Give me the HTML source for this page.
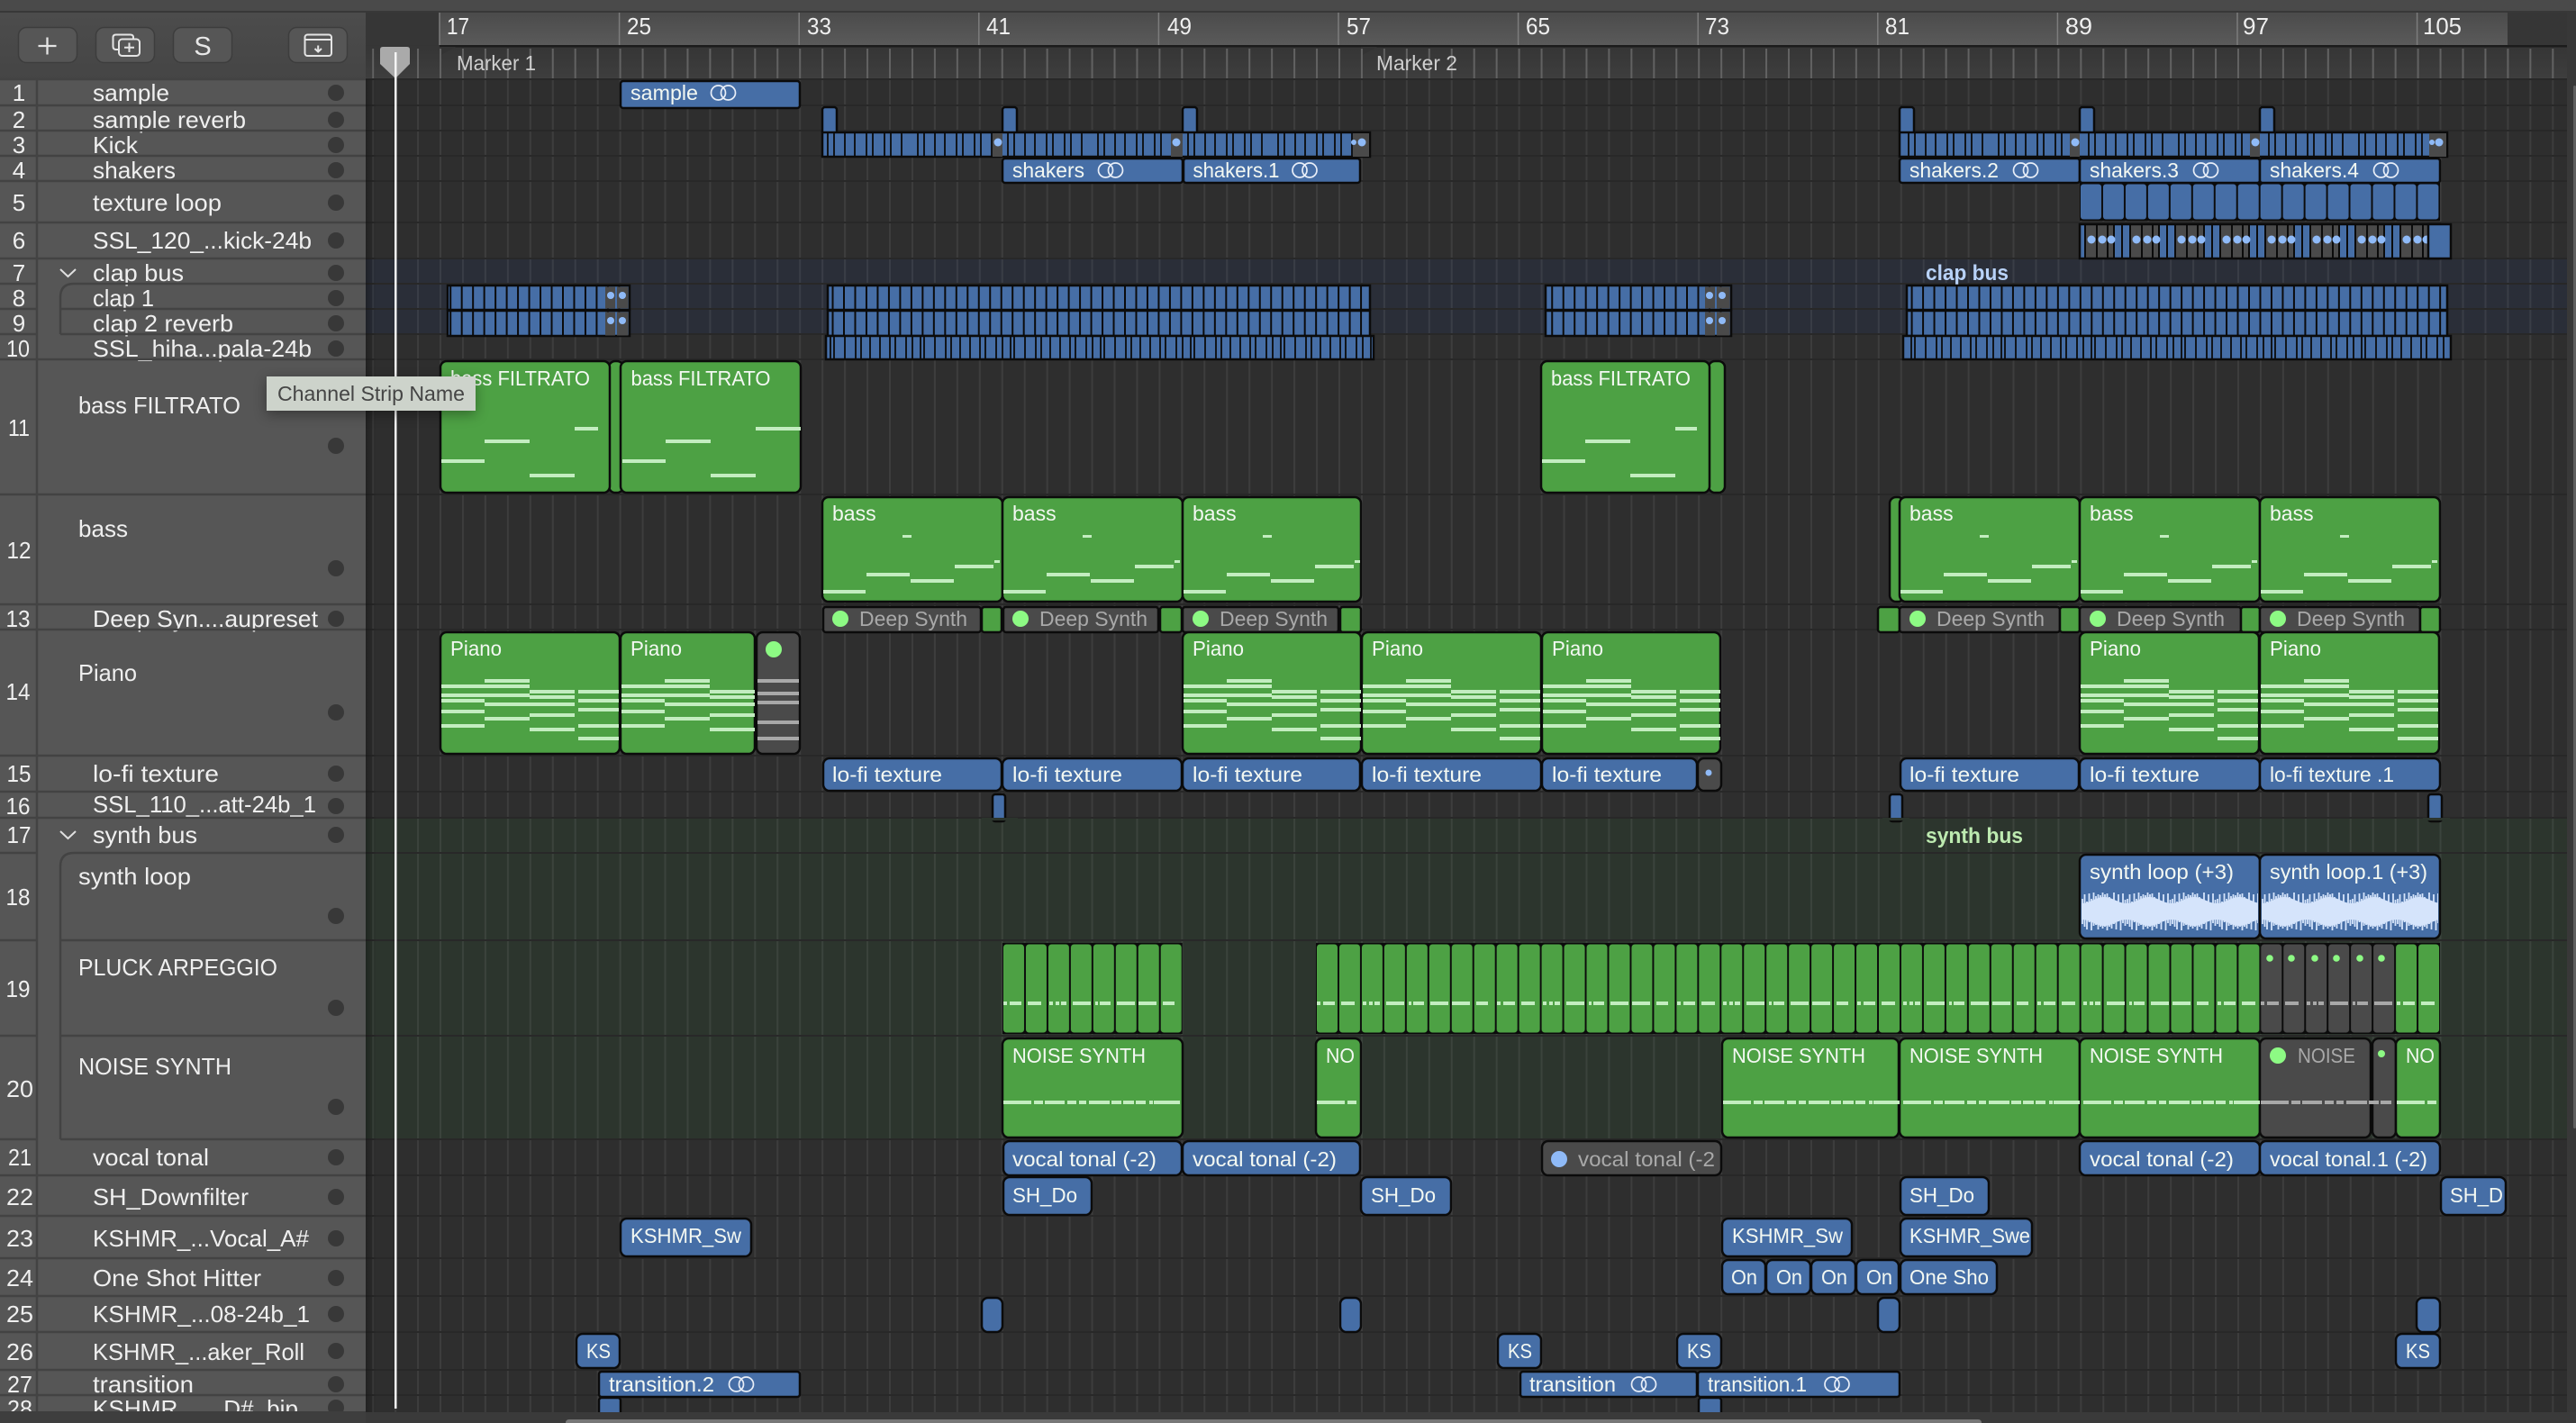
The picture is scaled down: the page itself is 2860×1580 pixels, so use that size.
<!DOCTYPE html>
<html><head><meta charset="utf-8"><title>Arrangement</title>
<style>
html,body{margin:0;padding:0;background:#2e2e2e;width:2860px;height:1580px;overflow:hidden}
svg{position:absolute;left:0;top:0;display:block}
text{font:23px "Liberation Sans",sans-serif;fill:#f3f8f2}
.n{font-size:26px;fill:#efefef}
.mt{fill:#a9a9a9}
.bd{font-weight:bold;font-size:24px}
.b{fill:#466ea6}.g{fill:#4da144}.m{fill:#4a4a4a}
.b,.g,.m,.k{stroke:#0b0b0b;stroke-width:2.5}
.b,.g,.m{rx:7px}
.q{rx:3px}
.dot{fill:#383838}
.bl{fill:#8fbaf7}.gd{fill:#8dfa84}
</style></head><body>
<svg width="2860" height="1580" viewBox="0 0 2860 1580" xmlns="http://www.w3.org/2000/svg">
<defs>
<linearGradient id="rg" x1="0" y1="0" x2="0" y2="1"><stop offset="0" stop-color="#4b4b4b"/><stop offset="1" stop-color="#5a5a5a"/></linearGradient>
<linearGradient id="lg" x1="0" y1="0" x2="0" y2="1"><stop offset="0" stop-color="#353535"/><stop offset="1" stop-color="#3e3e3e"/></linearGradient>
<linearGradient id="hg" x1="0" y1="0" x2="0" y2="1"><stop offset="0" stop-color="#4c4c4c"/><stop offset="1" stop-color="#454545"/></linearGradient>
<linearGradient id="sh" x1="0" y1="0" x2="1" y2="0"><stop offset="0" stop-color="#000" stop-opacity=".28"/><stop offset="1" stop-color="#000" stop-opacity="0"/></linearGradient>
<pattern id="pV" patternUnits="userSpaceOnUse" width="24.95" height="40"><rect width="2" height="40" fill="#fff" fill-opacity=".07"/></pattern>
<pattern id="pT" patternUnits="userSpaceOnUse" width="24.95" height="40"><rect width="2" height="40" fill="#626262"/></pattern>
<pattern id="pK" patternUnits="userSpaceOnUse" width="100" height="40" patternTransform="translate(13,0)"><rect width="100" height="40" fill="#466ea6"/><path d="M6 0v40M13 0v40M25 0v40M36 0v40M49 0v40M56 0v40M69 0v40M76 0v40M88 0v40" stroke="#0b0b0b" stroke-width="1.800"/></pattern>
<pattern id="pC" patternUnits="userSpaceOnUse" width="12.48" height="40"><rect width="12.48" height="40" fill="#466ea6"/><rect width="2" height="40" fill="#0b0b0b"/></pattern>
<pattern id="pH" patternUnits="userSpaceOnUse" width="100" height="40"><rect width="100" height="40" fill="#466ea6"/><path d="M6 0v40M13 0v40M22 0v40M26 0v40M38 0v40M50 0v40M56 0v40M66 0v40M77 0v40M88 0v40M94 0v40" stroke="#0b0b0b" stroke-width="1.800"/></pattern>
<pattern id="pR" patternUnits="userSpaceOnUse" width="24.96" height="42"><rect width="24.96" height="42" fill="#0b0b0b"/><rect x="1" y="1.5" width="23" height="39" rx="3" fill="#466ea6"/></pattern>
<pattern id="pS" patternUnits="userSpaceOnUse" width="50" height="38"><rect width="50" height="38" fill="#466ea6"/><rect x="6" width="32" height="38" fill="#4a4a4a"/><path d="M6 0v38M19 0v38M31 0v38M38 0v38M47 0v38" stroke="#0b0b0b" stroke-width="2"/><circle cx="13" cy="17" r="4.5" fill="#8fbaf7"/><circle cx="25" cy="17" r="4.5" fill="#8fbaf7"/><circle cx="35" cy="17" r="4.5" fill="#8fbaf7"/></pattern>
<pattern id="pG" patternUnits="userSpaceOnUse" width="24.96" height="101"><rect width="24.96" height="101" fill="#0b0b0b"/><rect x="1" y="1.5" width="23" height="98" rx="3.5" fill="#4da144"/></pattern>
<pattern id="pGm" patternUnits="userSpaceOnUse" width="24.96" height="101"><rect width="24.96" height="101" fill="#0b0b0b"/><rect x="1" y="1.5" width="23" height="98" rx="3.5" fill="#4a4a4a"/></pattern>
<pattern id="pD" patternUnits="userSpaceOnUse" width="200" height="4"><path d="M1 2H5M8 2H21M28 2H43M52 2H56M59 2H63M65 2H71M78 2H98M103 2H106M108 2H120M127 2H147M151 2H171M178 2H191" stroke="#c3edc0" stroke-width="4"/></pattern>
<pattern id="pDm" patternUnits="userSpaceOnUse" width="200" height="4"><path d="M1 2H5M8 2H21M28 2H43M52 2H56M59 2H63M65 2H71M78 2H98M103 2H106M108 2H120M127 2H147M151 2H171M178 2H191" stroke="#a8a8a8" stroke-width="4"/></pattern>
<pattern id="pN" patternUnits="userSpaceOnUse" width="200" height="4"><path d="M1 2H32M35 2H45M47 2H69M72 2H82M85 2H93M96 2H119M121 2H132M134 2H146M148 2H159M163 2H167M168 2H197" stroke="#c3edc0" stroke-width="4"/></pattern>
<pattern id="pNm" patternUnits="userSpaceOnUse" width="200" height="4"><path d="M1 2H32M35 2H45M47 2H69M72 2H82M85 2H93M96 2H119M121 2H132M134 2H146M148 2H159M163 2H167M168 2H197" stroke="#a8a8a8" stroke-width="4"/></pattern>
<pattern id="pW" patternUnits="userSpaceOnUse" width="50" height="44"><path d="M0 13C10 13 15 6 25 6C35 6 40 13 50 13V31C40 31 35 38 25 38C15 38 10 31 0 31Z" fill="#d5e4fb"/><path d="M1 8V36M3.500 3V39M6 11V42M8.500 2V34M11 8V43M13.500 1V38M16 5V37M18.500 3V42M21 4V39M23.500 1V41M26 3V39M28.500 2V43M31 6V39M33.500 8V41M36 1V36M38.500 10V42M41 3V33M43.500 12V43M46 2V35M48.500 9V38" stroke="#d5e4fb" stroke-width="1.800"/></pattern>
<g id="lp" fill="none" stroke="#e8eef8" stroke-width="1.7"><circle cx="-5.500" r="8"/><circle cx="5.500" r="8"/></g>
<g id="fn" fill="#c3edc0"><rect x="2" y="510" width="48" height="4"/><rect x="50" y="488" width="50" height="4"/><rect x="100" y="526" width="50" height="4"/><rect x="150" y="474" width="50" height="4"/></g>
<g id="bn" fill="#c3edc0"><rect x="1" y="655" width="47" height="4"/><rect x="49" y="636" width="48" height="4"/><rect x="98" y="643" width="48" height="4"/><rect x="147" y="627" width="43" height="4"/><rect x="191" y="622" width="6" height="3"/><rect x="89" y="594" width="10" height="3"/></g>
<g id="pn" fill="#c3edc0"><rect x="1" y="760" width="48" height="4"/><rect x="1" y="770" width="48" height="4"/><rect x="1" y="776" width="48" height="4"/><rect x="1" y="788" width="48" height="4"/><rect x="1" y="804" width="48" height="4"/><rect x="49" y="754" width="50" height="4"/><rect x="49" y="760" width="50" height="4"/><rect x="49" y="770" width="50" height="4"/><rect x="49" y="780" width="50" height="4"/><rect x="49" y="796" width="50" height="4"/><rect x="99" y="766" width="50" height="4"/><rect x="99" y="772" width="50" height="4"/><rect x="99" y="780" width="50" height="4"/><rect x="99" y="792" width="50" height="4"/><rect x="99" y="808" width="50" height="4"/></g>
<g id="pn4" fill="#c3edc0"><rect x="153" y="766" width="45" height="4"/><rect x="153" y="776" width="45" height="4"/><rect x="153" y="786" width="45" height="4"/><rect x="153" y="804" width="45" height="4"/><rect x="153" y="818" width="45" height="4"/></g>
</defs>

<!-- backgrounds -->
<rect width="2860" height="1580" fill="#2e2e2e"/>
<rect width="2860" height="13" fill="#4a4a4a"/>
<rect y="12" width="2860" height="2" fill="#383838"/>
<rect x="406" y="14" width="2454" height="74" fill="#363636"/>
<rect x="488" y="14" width="2296" height="36" fill="url(#rg)"/>
<rect x="406" y="50" width="2444" height="38" fill="url(#lg)"/>
<rect x="488" y="50" width="2362" height="2.500" fill="#1c1c1c"/>
<path d="M488 62V52H506Z" fill="#333"/>
<path d="M1511 62V52H1529Z" fill="#333"/>
<rect x="2850" y="14" width="10" height="1566" fill="#383838"/>
<rect x="406" y="287" width="2444" height="84" fill="#2a2e38"/>
<rect x="406" y="908" width="2444" height="357" fill="#2c352d"/>
<g transform="translate(413.150,54)"><rect width="2436" height="34" fill="url(#pT)"/></g>
<g transform="translate(413.150,88)"><rect width="2436" height="1480" fill="url(#pV)"/></g>
<path stroke="#282828" stroke-width="2" d="M406 88H2850M406 117H2850M406 145H2850M406 173H2850M406 201H2850M406 247H2850M406 287H2850M406 315H2850M406 343H2850M406 371H2850M406 399H2850M406 549H2850M406 671H2850M406 699H2850M406 839H2850M406 879H2850M406 908H2850M406 947H2850M406 1044H2850M406 1150H2850M406 1265H2850M406 1305H2850M406 1350H2850M406 1397H2850M406 1439H2850M406 1479H2850M406 1521H2850M406 1549H2850"/>
<rect x="406" y="88" width="12" height="1480" fill="url(#sh)"/>

<!-- ruler -->
<path stroke="#7c7c7c" stroke-width="1.500" d="M488 14V50M687.600 14V50M887.200 14V50M1086.800 14V50M1286.400 14V50M1486 14V50M1685.600 14V50M1885.200 14V50M2084.800 14V50M2284.400 14V50M2484 14V50M2683.600 14V50"/>
<g style="fill:#dcdcdc">
<text class="n" x="496" y="38" textLength="25" lengthAdjust="spacingAndGlyphs">17</text>
<text class="n" x="696" y="38" textLength="27" lengthAdjust="spacingAndGlyphs">25</text>
<text class="n" x="896" y="38" textLength="27" lengthAdjust="spacingAndGlyphs">33</text>
<text class="n" x="1095" y="38" textLength="27" lengthAdjust="spacingAndGlyphs">41</text>
<text class="n" x="1296" y="38" textLength="27" lengthAdjust="spacingAndGlyphs">49</text>
<text class="n" x="1495" y="38" textLength="27" lengthAdjust="spacingAndGlyphs">57</text>
<text class="n" x="1694" y="38" textLength="27" lengthAdjust="spacingAndGlyphs">65</text>
<text class="n" x="1893" y="38" textLength="27" lengthAdjust="spacingAndGlyphs">73</text>
<text class="n" x="2093" y="38" textLength="27" lengthAdjust="spacingAndGlyphs">81</text>
<text class="n" x="2293" y="38" textLength="30" lengthAdjust="spacingAndGlyphs">89</text>
<text class="n" x="2490" y="38" textLength="29" lengthAdjust="spacingAndGlyphs">97</text>
<text class="n" x="2690" y="38" textLength="43" lengthAdjust="spacingAndGlyphs">105</text>
</g>
<text x="507" y="78" textLength="88" lengthAdjust="spacingAndGlyphs" style="fill:#cfcfcf">Marker 1</text>
<text x="1528" y="78" textLength="90" lengthAdjust="spacingAndGlyphs" style="fill:#cfcfcf">Marker 2</text>

<!-- track list -->
<rect x="0" y="14" width="406" height="74" fill="url(#hg)"/>
<rect x="0" y="88" width="406" height="1480" fill="#565656"/>
<rect x="0" y="1567" width="406" height="13" fill="#3e3e3e"/>
<g fill="#565656" stroke="#3d3d3d" stroke-width="1.500">
<rect x="20.500" y="30.500" width="65" height="39" rx="9"/>
<rect x="106.500" y="30.500" width="65" height="39" rx="9"/>
<rect x="192.500" y="30.500" width="65" height="39" rx="9"/>
<rect x="320.500" y="30.500" width="65" height="39" rx="9"/>
</g>
<path d="M42.500 51H62.500M52.500 41.500V60.500" stroke="#e4e4e4" stroke-width="2.300" fill="none"/>
<path d="M132 55H129Q125.500 55 125.500 51.500V41.500Q125.500 38.500 129 38.500H144.500Q148 38.500 148 41.500V43" stroke="#e4e4e4" stroke-width="2" fill="none"/>
<rect x="132" y="43.500" width="23" height="18.500" rx="3.500" stroke="#e4e4e4" stroke-width="2" fill="none"/>
<path d="M138 52.700H149M143.500 47.500V58" stroke="#e4e4e4" stroke-width="2" fill="none"/>
<text x="225" y="61" text-anchor="middle" style="font-size:29px;fill:#e8e8e8">S</text>
<rect x="338.500" y="38.500" width="29.500" height="23.500" rx="3" stroke="#e4e4e4" stroke-width="2" fill="none"/>
<path d="M338.500 44H368M353.200 50.500V57.500M349.500 54L353.200 57.500L357 54" stroke="#e4e4e4" stroke-width="2" fill="none"/>

<g>
<g class="nums" text-anchor="middle">
<text class="n" x="21" y="112" text-anchor="middle">1</text>
<text class="n" x="21" y="142" text-anchor="middle">2</text>
<text class="n" x="21" y="170" text-anchor="middle">3</text>
<text class="n" x="21" y="198" text-anchor="middle">4</text>
<text class="n" x="21" y="234" text-anchor="middle">5</text>
<text class="n" x="21" y="276" text-anchor="middle">6</text>
<text class="n" x="21" y="312" text-anchor="middle">7</text>
<text class="n" x="21" y="340" text-anchor="middle">8</text>
<text class="n" x="21" y="368" text-anchor="middle">9</text>
<text class="n" x="20" y="396" text-anchor="middle" textLength="26" lengthAdjust="spacingAndGlyphs">10</text>
<text class="n" x="21" y="484" text-anchor="middle" textLength="24" lengthAdjust="spacingAndGlyphs">11</text>
<text class="n" x="21" y="620" text-anchor="middle" textLength="27" lengthAdjust="spacingAndGlyphs">12</text>
<text class="n" x="20" y="696" text-anchor="middle" textLength="27" lengthAdjust="spacingAndGlyphs">13</text>
<text class="n" x="20" y="777" text-anchor="middle" textLength="27" lengthAdjust="spacingAndGlyphs">14</text>
<text class="n" x="21" y="868" text-anchor="middle" textLength="27" lengthAdjust="spacingAndGlyphs">15</text>
<text class="n" x="20" y="904" text-anchor="middle" textLength="27" lengthAdjust="spacingAndGlyphs">16</text>
<text class="n" x="21" y="936" text-anchor="middle" textLength="27" lengthAdjust="spacingAndGlyphs">17</text>
<text class="n" x="20" y="1005" text-anchor="middle" textLength="27" lengthAdjust="spacingAndGlyphs">18</text>
<text class="n" x="20" y="1107" text-anchor="middle" textLength="27" lengthAdjust="spacingAndGlyphs">19</text>
<text class="n" x="22" y="1218" text-anchor="middle" textLength="30" lengthAdjust="spacingAndGlyphs">20</text>
<text class="n" x="22" y="1294" text-anchor="middle" textLength="26" lengthAdjust="spacingAndGlyphs">21</text>
<text class="n" x="22" y="1338" text-anchor="middle" textLength="30" lengthAdjust="spacingAndGlyphs">22</text>
<text class="n" x="22" y="1384" text-anchor="middle" textLength="30" lengthAdjust="spacingAndGlyphs">23</text>
<text class="n" x="22" y="1428" text-anchor="middle" textLength="30" lengthAdjust="spacingAndGlyphs">24</text>
<text class="n" x="22" y="1468" text-anchor="middle" textLength="30" lengthAdjust="spacingAndGlyphs">25</text>
<text class="n" x="22" y="1510" text-anchor="middle" textLength="30" lengthAdjust="spacingAndGlyphs">26</text>
<text class="n" x="22" y="1546" text-anchor="middle" textLength="28" lengthAdjust="spacingAndGlyphs">27</text>
<text class="n" x="22" y="1573" text-anchor="middle" textLength="28" lengthAdjust="spacingAndGlyphs">28</text>
</g>
<text class="n" x="103" y="112" textLength="85" lengthAdjust="spacingAndGlyphs">sample</text>
<text class="n" x="103" y="142" textLength="170" lengthAdjust="spacingAndGlyphs">sample reverb</text>
<text class="n" x="103" y="170" textLength="50" lengthAdjust="spacingAndGlyphs">Kick</text>
<text class="n" x="103" y="198" textLength="92" lengthAdjust="spacingAndGlyphs">shakers</text>
<text class="n" x="103" y="234" textLength="143" lengthAdjust="spacingAndGlyphs">texture loop</text>
<text class="n" x="103" y="276" textLength="243" lengthAdjust="spacingAndGlyphs">SSL_120_...kick-24b</text>
<text class="n" x="103" y="312" textLength="101" lengthAdjust="spacingAndGlyphs">clap bus</text>
<text class="n" x="103" y="340" textLength="68" lengthAdjust="spacingAndGlyphs">clap 1</text>
<text class="n" x="103" y="368" textLength="156" lengthAdjust="spacingAndGlyphs">clap 2 reverb</text>
<text class="n" x="103" y="396" textLength="243" lengthAdjust="spacingAndGlyphs">SSL_hiha...pala-24b</text>
<text class="n" x="87" y="459" textLength="180" lengthAdjust="spacingAndGlyphs">bass FILTRATO</text>
<text class="n" x="87" y="596" textLength="55" lengthAdjust="spacingAndGlyphs">bass</text>
<text class="n" x="103" y="696" textLength="250" lengthAdjust="spacingAndGlyphs">Deep Syn....aupreset</text>
<text class="n" x="87" y="756" textLength="65" lengthAdjust="spacingAndGlyphs">Piano</text>
<text class="n" x="103" y="868" textLength="140" lengthAdjust="spacingAndGlyphs">lo-fi texture</text>
<text class="n" x="103" y="902" textLength="248" lengthAdjust="spacingAndGlyphs">SSL_110_...att-24b_1</text>
<text class="n" x="103" y="936" textLength="116" lengthAdjust="spacingAndGlyphs">synth bus</text>
<text class="n" x="87" y="982" textLength="125" lengthAdjust="spacingAndGlyphs">synth loop</text>
<text class="n" x="87" y="1083" textLength="221" lengthAdjust="spacingAndGlyphs">PLUCK ARPEGGIO</text>
<text class="n" x="87" y="1193" textLength="170" lengthAdjust="spacingAndGlyphs">NOISE SYNTH</text>
<text class="n" x="103" y="1294" textLength="129" lengthAdjust="spacingAndGlyphs">vocal tonal</text>
<text class="n" x="103" y="1338" textLength="173" lengthAdjust="spacingAndGlyphs">SH_Downfilter</text>
<text class="n" x="103" y="1384" textLength="240" lengthAdjust="spacingAndGlyphs">KSHMR_...Vocal_A#</text>
<text class="n" x="103" y="1428" textLength="187" lengthAdjust="spacingAndGlyphs">One Shot Hitter</text>
<text class="n" x="103" y="1468" textLength="241" lengthAdjust="spacingAndGlyphs">KSHMR_...08-24b_1</text>
<text class="n" x="103" y="1510" textLength="235" lengthAdjust="spacingAndGlyphs">KSHMR_...aker_Roll</text>
<text class="n" x="103" y="1546" textLength="112" lengthAdjust="spacingAndGlyphs">transition</text>
<text class="n" x="103" y="1573" textLength="228" lengthAdjust="spacingAndGlyphs">KSHMR_..._D#_bip</text>
</g>
<path fill="none" stroke="#434343" stroke-width="2.500" d="M0 88H406M0 117H406M0 145H406M0 173H406M0 201H406M0 247H406M0 287H406M0 315H41M0 343H41M0 371H41M0 399H406M0 549H406M0 671H406M0 699H406M0 839H406M0 879H406M0 908H406M0 947H41M0 1044H41M0 1150H41M0 1265H41M0 1305H406M0 1350H406M0 1397H406M0 1439H406M0 1479H406M0 1521H406M0 1549H406M41 88V1567M67 371V330Q67 315 82 315H406M67 343H406M67 371H406M67 1265V962Q67 947 82 947H406M67 1044H406M67 1150H406M67 1265H406"/>
<path d="M67 299L75.500 307L84 299M67 923L75.500 931L84 923" fill="none" stroke="#e0e0e0" stroke-width="2"/>
<g class="dot">
<circle cx="373" cy="103" r="9"/><circle cx="373" cy="133" r="9"/><circle cx="373" cy="161" r="9"/><circle cx="373" cy="189" r="9"/><circle cx="373" cy="225" r="9"/><circle cx="373" cy="267" r="9"/><circle cx="373" cy="303" r="9"/><circle cx="373" cy="331" r="9"/><circle cx="373" cy="359" r="9"/><circle cx="373" cy="387" r="9"/><circle cx="373" cy="495" r="9"/><circle cx="373" cy="631" r="9"/><circle cx="373" cy="687" r="9"/><circle cx="373" cy="791" r="9"/><circle cx="373" cy="859" r="9"/><circle cx="373" cy="895" r="9"/><circle cx="373" cy="927" r="9"/><circle cx="373" cy="1017" r="9"/><circle cx="373" cy="1119" r="9"/><circle cx="373" cy="1229" r="9"/><circle cx="373" cy="1285" r="9"/><circle cx="373" cy="1329" r="9"/><circle cx="373" cy="1375" r="9"/><circle cx="373" cy="1419" r="9"/><circle cx="373" cy="1459" r="9"/><circle cx="373" cy="1500" r="9"/><circle cx="373" cy="1537" r="9"/><circle cx="373" cy="1563" r="9"/>
</g>

<!-- row 1 -->
<rect class="b q" x="689" y="90" width="199" height="30"/>
<text x="700" y="111" textLength="75" lengthAdjust="spacingAndGlyphs">sample</text><use href="#lp" x="803" y="103"/>
<!-- row 2 -->
<rect class="b q" x="913" y="119" width="16" height="30"/><rect class="b q" x="1113" y="119" width="16" height="30"/><rect class="b q" x="1313" y="119" width="16" height="30"/><rect class="b q" x="2109" y="119" width="16" height="30"/><rect class="b q" x="2309" y="119" width="16" height="30"/><rect class="b q" x="2509" y="119" width="16" height="30"/>
<!-- row 3 -->
<rect class="k" x="913" y="147" width="608" height="27" fill="url(#pK)"/>
<rect class="k" x="2109" y="147" width="608" height="27" fill="url(#pK)"/>
<g fill="#4a4a4a">
<rect x="1102" y="148" width="11" height="26"/><rect x="1300" y="148" width="13" height="26"/><rect x="1502" y="148" width="18" height="26"/><rect x="2298" y="148" width="11" height="26"/><rect x="2498" y="148" width="11" height="26"/><rect x="2697" y="148" width="19" height="26"/>
</g>
<g class="bl"><circle cx="1108" cy="158" r="4.500"/><circle cx="1306" cy="158" r="4.500"/><circle cx="1512" cy="158" r="4.500"/><circle cx="1503" cy="158" r="3"/><circle cx="2304" cy="158" r="4.500"/><circle cx="2504" cy="158" r="4.500"/><circle cx="2708" cy="158" r="4.500"/><circle cx="2700" cy="158" r="3"/></g>
<!-- row 4 -->
<rect class="b q" x="1113" y="176" width="200" height="27"/><rect class="b q" x="1314" y="176" width="196" height="27"/>
<rect class="b q" x="2109" y="176" width="200" height="27"/><rect class="b q" x="2309" y="176" width="200" height="27"/><rect class="b q" x="2509" y="176" width="200" height="27"/>
<text x="1124" y="197" textLength="80" lengthAdjust="spacingAndGlyphs">shakers</text><use href="#lp" x="1233" y="189"/>
<text x="1324.500" y="197" textLength="96" lengthAdjust="spacingAndGlyphs">shakers.1</text><use href="#lp" x="1448.500" y="189"/>
<text x="2120" y="197" textLength="99" lengthAdjust="spacingAndGlyphs">shakers.2</text><use href="#lp" x="2249" y="189"/>
<text x="2320" y="197" textLength="99" lengthAdjust="spacingAndGlyphs">shakers.3</text><use href="#lp" x="2449" y="189"/>
<text x="2520" y="197" textLength="99" lengthAdjust="spacingAndGlyphs">shakers.4</text><use href="#lp" x="2649" y="189"/>
<!-- row 5 -->
<g transform="translate(2309,203)"><rect width="400" height="42" fill="url(#pR)"/></g>
<!-- row 6 -->
<g transform="translate(2309,249)"><rect class="k" width="400" height="38" fill="url(#pS)"/><rect class="k" x="387" width="25" height="38" fill="#466ea6"/></g>
<!-- clap bus -->
<text class="bd" x="2138" y="311" textLength="92" lengthAdjust="spacingAndGlyphs" style="fill:#b8d2f8">clap bus</text>
<g class="k">
<rect x="497" y="317" width="202" height="27" fill="url(#pC)"/><rect x="497" y="345" width="202" height="28" fill="url(#pC)"/>
<rect x="919" y="317" width="602" height="27" fill="url(#pC)"/><rect x="919" y="345" width="602" height="28" fill="url(#pC)"/>
<rect x="1716" y="317" width="206" height="27" fill="url(#pC)"/><rect x="1716" y="345" width="206" height="28" fill="url(#pC)"/>
<rect x="2117" y="317" width="600" height="27" fill="url(#pC)"/><rect x="2117" y="345" width="600" height="28" fill="url(#pC)"/>
<rect x="917" y="373" width="608" height="26" fill="url(#pH)"/><rect x="2113" y="373" width="608" height="26" fill="url(#pH)"/>
</g>
<g fill="#4a4a4a">
<rect x="672" y="318.500" width="11" height="24"/><rect x="685" y="318.500" width="12.500" height="24"/><rect x="672" y="346.500" width="11" height="26"/><rect x="685" y="346.500" width="12.500" height="26"/>
<rect x="1893" y="318.500" width="11" height="24"/><rect x="1906" y="318.500" width="14.500" height="24"/><rect x="1893" y="346.500" width="11" height="26"/><rect x="1906" y="346.500" width="14.500" height="26"/>
</g>
<g class="bl"><circle cx="678" cy="328" r="4"/><circle cx="691" cy="328" r="4"/><circle cx="678" cy="356" r="4"/><circle cx="691" cy="356" r="4"/><circle cx="1898" cy="328" r="4"/><circle cx="1912" cy="328" r="4"/><circle cx="1898" cy="356" r="4"/><circle cx="1912" cy="356" r="4"/></g>

<!-- row 11 -->
<rect class="g" x="676" y="401" width="16" height="146"/><rect class="g" x="1897" y="401" width="18" height="146"/>
<rect class="g" x="489" y="401" width="188" height="146"/><rect class="g" x="689" y="401" width="200" height="146"/><rect class="g" x="1711" y="401" width="187" height="146"/>
<text x="500" y="428" textLength="155" lengthAdjust="spacingAndGlyphs">bass FILTRATO</text>
<text x="700.500" y="428" textLength="155" lengthAdjust="spacingAndGlyphs">bass FILTRATO</text>
<text x="1722" y="428" textLength="155" lengthAdjust="spacingAndGlyphs">bass FILTRATO</text>
<g fill="#c3edc0"><rect x="490" y="510" width="48" height="4"/><rect x="538" y="488" width="50" height="4"/><rect x="588" y="526" width="50" height="4"/><rect x="638" y="474" width="26" height="4"/></g>
<use href="#fn" x="689" y="0"/>
<g fill="#c3edc0"><rect x="1712" y="510" width="48" height="4"/><rect x="1760" y="488" width="50" height="4"/><rect x="1810" y="526" width="50" height="4"/><rect x="1860" y="474" width="24" height="4"/></g>
<!-- row 12 -->
<rect class="g" x="2098" y="552" width="16" height="116"/>
<rect class="g" x="913" y="552" width="200" height="116"/><rect class="g" x="1113" y="552" width="200" height="116"/><rect class="g" x="1313" y="552" width="198" height="116"/>
<rect class="g" x="2109" y="552" width="200" height="116"/><rect class="g" x="2309" y="552" width="200" height="116"/><rect class="g" x="2509" y="552" width="200" height="116"/>
<text x="924" y="578">bass</text><text x="1124" y="578">bass</text><text x="1324" y="578">bass</text><text x="2120" y="578">bass</text><text x="2320" y="578">bass</text><text x="2520" y="578">bass</text>
<use href="#bn" x="913"/><use href="#bn" x="1113"/><use href="#bn" x="1313"/><use href="#bn" x="2109"/><use href="#bn" x="2309"/><use href="#bn" x="2509"/>
<!-- row 13 -->
<g>
<rect class="m q" x="914" y="674" width="175" height="28"/><rect class="g q" x="1090" y="674" width="22" height="28"/>
<rect class="m q" x="1114" y="674" width="172" height="28"/><rect class="g q" x="1288" y="674" width="24" height="28"/>
<rect class="m q" x="1313" y="674" width="173" height="28"/><rect class="g q" x="1488" y="674" width="23" height="28"/>
<rect class="g q" x="2085" y="674" width="24" height="28"/>
<rect class="m q" x="2109" y="674" width="178" height="28"/><rect class="g q" x="2287" y="674" width="22" height="28"/>
<rect class="m q" x="2309" y="674" width="179" height="28"/><rect class="g q" x="2488" y="674" width="21" height="28"/>
<rect class="m q" x="2509" y="674" width="178" height="28"/><rect class="g q" x="2687" y="674" width="22" height="28"/>
</g>
<g class="gd"><circle cx="933" cy="687" r="9"/><circle cx="1133" cy="687" r="9"/><circle cx="1333" cy="687" r="9"/><circle cx="2129" cy="687" r="9"/><circle cx="2329" cy="687" r="9"/><circle cx="2529" cy="687" r="9"/></g>
<text class="mt" x="954" y="695" textLength="120" lengthAdjust="spacingAndGlyphs">Deep Synth</text>
<text class="mt" x="1154" y="695" textLength="120" lengthAdjust="spacingAndGlyphs">Deep Synth</text>
<text class="mt" x="1354" y="695" textLength="120" lengthAdjust="spacingAndGlyphs">Deep Synth</text>
<text class="mt" x="2150" y="695" textLength="120" lengthAdjust="spacingAndGlyphs">Deep Synth</text>
<text class="mt" x="2350" y="695" textLength="120" lengthAdjust="spacingAndGlyphs">Deep Synth</text>
<text class="mt" x="2550" y="695" textLength="120" lengthAdjust="spacingAndGlyphs">Deep Synth</text>
<!-- row 14 -->
<rect class="g" x="489" y="702" width="199" height="135"/><rect class="g" x="689" y="702" width="149" height="135"/><rect class="m" x="840" y="702" width="48" height="135"/>
<rect class="g" x="1313" y="702" width="198" height="135"/><rect class="g" x="1512" y="702" width="199" height="135"/><rect class="g" x="1712" y="702" width="198" height="135"/>
<rect class="g" x="2309" y="702" width="199" height="135"/><rect class="g" x="2509" y="702" width="199" height="135"/>
<text x="500" y="728" textLength="57" lengthAdjust="spacingAndGlyphs">Piano</text><text x="700" y="728" textLength="57" lengthAdjust="spacingAndGlyphs">Piano</text>
<text x="1324" y="728" textLength="57" lengthAdjust="spacingAndGlyphs">Piano</text><text x="1523" y="728" textLength="57" lengthAdjust="spacingAndGlyphs">Piano</text><text x="1723" y="728" textLength="57" lengthAdjust="spacingAndGlyphs">Piano</text>
<text x="2320" y="728" textLength="57" lengthAdjust="spacingAndGlyphs">Piano</text><text x="2520" y="728" textLength="57" lengthAdjust="spacingAndGlyphs">Piano</text>
<use href="#pn" x="489"/><use href="#pn4" x="489"/><use href="#pn" x="689"/>
<use href="#pn" x="1313"/><use href="#pn4" x="1313"/><use href="#pn" x="1512"/><use href="#pn4" x="1512"/><use href="#pn" x="1712"/><use href="#pn4" x="1712"/>
<use href="#pn" x="2309"/><use href="#pn4" x="2309"/><use href="#pn" x="2509"/><use href="#pn4" x="2509"/>
<circle class="gd" cx="859" cy="721" r="9"/>
<g fill="#a8a8a8"><rect x="841" y="754" width="46" height="4"/><rect x="841" y="768" width="46" height="4"/><rect x="841" y="778" width="46" height="4"/><rect x="841" y="800" width="46" height="4"/><rect x="841" y="818" width="46" height="4"/></g>
<!-- row 15 -->
<rect class="b" x="914" y="842" width="198" height="36"/><rect class="b" x="1113" y="842" width="199" height="36"/><rect class="b" x="1313" y="842" width="197" height="36"/><rect class="b" x="1512" y="842" width="199" height="36"/><rect class="b" x="1712" y="842" width="172" height="36"/><rect class="m" x="1885" y="842" width="26" height="36"/>
<rect class="b" x="2110" y="842" width="198" height="36"/><rect class="b" x="2309" y="842" width="200" height="36"/><rect class="b" x="2509" y="842" width="200" height="36"/>
<circle class="bl" cx="1897" cy="858" r="3.500"/>
<text x="924" y="868" textLength="122" lengthAdjust="spacingAndGlyphs">lo-fi texture</text><text x="1124" y="868" textLength="122" lengthAdjust="spacingAndGlyphs">lo-fi texture</text><text x="1324" y="868" textLength="122" lengthAdjust="spacingAndGlyphs">lo-fi texture</text><text x="1523" y="868" textLength="122" lengthAdjust="spacingAndGlyphs">lo-fi texture</text><text x="1723" y="868" textLength="122" lengthAdjust="spacingAndGlyphs">lo-fi texture</text>
<text x="2120" y="868" textLength="122" lengthAdjust="spacingAndGlyphs">lo-fi texture</text><text x="2320" y="868" textLength="122" lengthAdjust="spacingAndGlyphs">lo-fi texture</text><text x="2520" y="868" textLength="138" lengthAdjust="spacingAndGlyphs">lo-fi texture .1</text>
<!-- row 16 -->
<rect class="b q" x="1102" y="882" width="14" height="30"/><rect class="b q" x="2098" y="882" width="14" height="30"/><rect class="b q" x="2696" y="882" width="15" height="30"/>
<rect x="1090" y="908" width="40" height="3" fill="#2c352d"/><rect x="2090" y="908" width="30" height="3" fill="#2c352d"/><rect x="2690" y="908" width="30" height="3" fill="#2c352d"/>
<!-- synth bus -->
<text class="bd" x="2138" y="936" textLength="108" lengthAdjust="spacingAndGlyphs" style="fill:#bdeab0">synth bus</text>
<!-- row 18 -->
<rect class="b" x="2309" y="949" width="200" height="93"/><rect class="b" x="2509" y="949" width="200" height="93"/>
<text x="2320" y="976" textLength="160" lengthAdjust="spacingAndGlyphs">synth loop (+3)</text><text x="2520" y="976" textLength="175" lengthAdjust="spacingAndGlyphs">synth loop.1 (+3)</text>
<g transform="translate(2311,990)"><rect width="196" height="44" fill="url(#pW)"/></g>
<g transform="translate(2511,990)"><rect width="196" height="44" fill="url(#pW)"/></g>
<!-- row 19 -->
<g transform="translate(1113,1047)"><rect width="199.700" height="101" fill="url(#pG)"/></g>
<g transform="translate(1461,1047)"><rect width="1048.300" height="101" fill="url(#pG)"/></g>
<g transform="translate(2509.300,1047)"><rect width="149.800" height="101" fill="url(#pGm)"/></g>
<g transform="translate(2659.100,1047)"><rect width="49.900" height="101" fill="url(#pG)"/></g>
<g transform="translate(1113,1112)"><rect width="197" height="4" fill="url(#pD)"/></g>
<g transform="translate(1461,1112)"><rect width="1046" height="4" fill="url(#pD)"/></g>
<g transform="translate(2509,1112)"><rect width="148" height="4" fill="url(#pDm)"/></g>
<g transform="translate(2660,1112)"><rect width="47" height="4" fill="url(#pD)"/></g>
<g class="gd"><circle cx="2520" cy="1064" r="3.800"/><circle cx="2544" cy="1064" r="3.800"/><circle cx="2570" cy="1064" r="3.800"/><circle cx="2594" cy="1064" r="3.800"/><circle cx="2620" cy="1064" r="3.800"/><circle cx="2644" cy="1064" r="3.800"/></g>
<!-- row 20 -->
<rect class="g" x="1113" y="1153" width="200" height="110"/><rect class="g" x="1461" y="1153" width="50" height="110"/><rect class="g" x="1912" y="1153" width="196" height="110"/><rect class="g" x="2109" y="1153" width="200" height="110"/><rect class="g" x="2309" y="1153" width="200" height="110"/><rect class="m" x="2509" y="1153" width="123" height="110"/><rect class="m" x="2634" y="1153" width="26" height="110"/><rect class="g" x="2660" y="1153" width="49" height="110"/>
<text x="1124" y="1180" textLength="148" lengthAdjust="spacingAndGlyphs">NOISE SYNTH</text><text x="1472" y="1180" textLength="32" lengthAdjust="spacingAndGlyphs">NO</text><text x="1923" y="1180" textLength="148" lengthAdjust="spacingAndGlyphs">NOISE SYNTH</text><text x="2120" y="1180" textLength="148" lengthAdjust="spacingAndGlyphs">NOISE SYNTH</text><text x="2320" y="1180" textLength="148" lengthAdjust="spacingAndGlyphs">NOISE SYNTH</text><text class="mt" x="2551" y="1180" textLength="64" lengthAdjust="spacingAndGlyphs">NOISE</text><text x="2671" y="1180" textLength="32" lengthAdjust="spacingAndGlyphs">NO</text>
<circle class="gd" cx="2529" cy="1172" r="9"/><circle class="gd" cx="2644" cy="1170" r="4"/>
<g transform="translate(1113,1222)"><rect width="198" height="4" fill="url(#pN)"/></g>
<g transform="translate(1461,1222)"><rect width="47" height="4" fill="url(#pN)"/></g>
<g transform="translate(1912,1222)"><rect width="597" height="4" fill="url(#pN)"/></g>
<g transform="translate(2509,1222)"><rect width="148" height="4" fill="url(#pNm)"/></g>
<g transform="translate(2660,1222)"><rect width="47" height="4" fill="url(#pN)"/></g>
<!-- row 21 -->
<rect class="b" x="1114" y="1267" width="198" height="38"/><rect class="b" x="1313" y="1267" width="197" height="38"/><rect class="m" x="1712" y="1267" width="199" height="38"/><rect class="b" x="2309" y="1267" width="200" height="38"/><rect class="b" x="2509" y="1267" width="200" height="38"/>
<text x="1124" y="1295" textLength="160" lengthAdjust="spacingAndGlyphs">vocal tonal (-2)</text><text x="1324" y="1295" textLength="160" lengthAdjust="spacingAndGlyphs">vocal tonal (-2)</text><text class="mt" x="1752" y="1295" textLength="152" lengthAdjust="spacingAndGlyphs">vocal tonal (-2</text><text x="2320" y="1295" textLength="160" lengthAdjust="spacingAndGlyphs">vocal tonal (-2)</text><text x="2520" y="1295" textLength="175" lengthAdjust="spacingAndGlyphs">vocal tonal.1 (-2)</text>
<circle class="bl" cx="1731" cy="1287" r="9"/>
<!-- row 22 -->
<rect class="b" x="1114" y="1307" width="98" height="42"/><rect class="b" x="1511" y="1307" width="100" height="42"/><rect class="b" x="2110" y="1307" width="98" height="42"/><rect class="b" x="2710" y="1307" width="72" height="42"/>
<text x="1124" y="1335" textLength="72" lengthAdjust="spacingAndGlyphs">SH_Do</text><text x="1522" y="1335" textLength="72" lengthAdjust="spacingAndGlyphs">SH_Do</text><text x="2120" y="1335" textLength="72" lengthAdjust="spacingAndGlyphs">SH_Do</text><text x="2720" y="1335" textLength="59" lengthAdjust="spacingAndGlyphs">SH_D</text>
<!-- row 23 -->
<rect class="b" x="689" y="1353" width="145" height="42"/><rect class="b" x="1912" y="1353" width="144" height="42"/><rect class="b" x="2110" y="1353" width="146" height="42"/>
<text x="700" y="1380" textLength="123" lengthAdjust="spacingAndGlyphs">KSHMR_Sw</text><text x="1923" y="1380" textLength="123" lengthAdjust="spacingAndGlyphs">KSHMR_Sw</text><text x="2120" y="1380" textLength="134" lengthAdjust="spacingAndGlyphs">KSHMR_Swe</text>
<!-- row 24 -->
<rect class="b" x="1912" y="1399" width="48" height="38"/><rect class="b" x="1961" y="1399" width="49" height="38"/><rect class="b" x="2011" y="1399" width="49" height="38"/><rect class="b" x="2061" y="1399" width="47" height="38"/><rect class="b" x="2110" y="1399" width="107" height="38"/>
<text x="1922" y="1426" textLength="29" lengthAdjust="spacingAndGlyphs">On</text><text x="1972" y="1426" textLength="29" lengthAdjust="spacingAndGlyphs">On</text><text x="2022" y="1426" textLength="29" lengthAdjust="spacingAndGlyphs">On</text><text x="2072" y="1426" textLength="29" lengthAdjust="spacingAndGlyphs">On</text><text x="2120" y="1426" textLength="88" lengthAdjust="spacingAndGlyphs">One Sho</text>
<!-- row 25 -->
<rect class="b" x="1090" y="1441" width="23" height="38"/><rect class="b" x="1488" y="1441" width="23" height="38"/><rect class="b" x="2085" y="1441" width="24" height="38"/><rect class="b" x="2683" y="1441" width="26" height="38"/>
<!-- row 26 -->
<rect class="b" x="640" y="1481" width="48" height="38"/><rect class="b" x="1663" y="1481" width="48" height="38"/><rect class="b" x="1862" y="1481" width="49" height="38"/><rect class="b" x="2660" y="1481" width="49" height="38"/>
<text x="651" y="1508" textLength="27" lengthAdjust="spacingAndGlyphs">KS</text><text x="1674" y="1508" textLength="27" lengthAdjust="spacingAndGlyphs">KS</text><text x="1873" y="1508" textLength="27" lengthAdjust="spacingAndGlyphs">KS</text><text x="2671" y="1508" textLength="27" lengthAdjust="spacingAndGlyphs">KS</text>
<!-- row 27 -->
<rect class="b q" x="665" y="1523" width="223" height="28"/><rect class="b q" x="1688" y="1523" width="196" height="28"/><rect class="b q" x="1885" y="1523" width="224" height="28"/>
<text x="676" y="1545" textLength="117" lengthAdjust="spacingAndGlyphs">transition.2</text><use href="#lp" x="823" y="1537"/>
<text x="1698" y="1545" textLength="96" lengthAdjust="spacingAndGlyphs">transition</text><use href="#lp" x="1825" y="1537"/>
<text x="1896" y="1545" textLength="110" lengthAdjust="spacingAndGlyphs">transition.1</text><use href="#lp" x="2039.500" y="1537"/>
<!-- row 28 -->
<rect class="b q" x="665" y="1552" width="24" height="24"/><rect class="b q" x="1886" y="1552" width="25" height="24"/>

<!-- playhead -->
<path d="M422 55Q422 52 425 52H452Q455 52 455 55V71L439 87L422 71Z" fill="#aaaaaa"/>
<rect x="438" y="58" width="2.500" height="1506" fill="#f4f4f4"/>

<!-- bottom / right scrollbars -->
<rect x="406" y="1568" width="2454" height="12" fill="#3a3a3a"/>
<rect x="0" y="1567" width="406" height="13" fill="#3e3e3e"/>
<path d="M632 1576H2196Q2200 1576 2200 1580H628Q628 1576 632 1576Z" fill="#777"/>
<rect x="2857" y="95" width="3" height="1158" rx="1.500" fill="#5f5f5f"/>

<!-- tooltip -->
<g style="filter:drop-shadow(0 4px 7px rgba(0,0,0,.35))"><rect x="296" y="418" width="232" height="38" fill="#cdd3cb"/></g>
<text x="308" y="445" textLength="208" lengthAdjust="spacingAndGlyphs" style="fill:#454545">Channel Strip Name</text>
</svg>
</body></html>
